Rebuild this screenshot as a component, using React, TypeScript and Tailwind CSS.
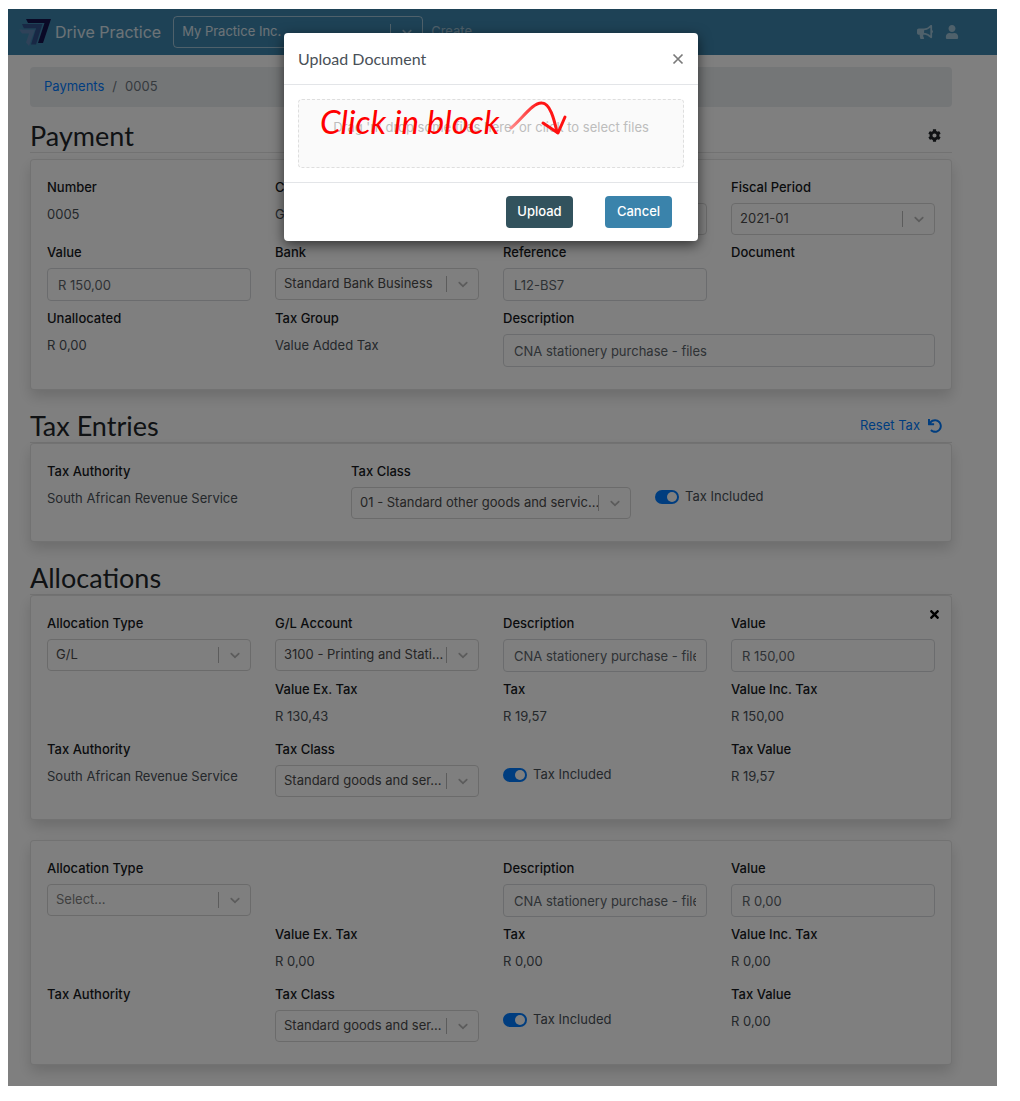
import { useState, type ReactNode } from 'react';
import { FaBullhorn, FaCog, FaTimes, FaUndo, FaUser } from 'react-icons/fa';
import clsx from 'clsx';

const ALLOCATIONS = [
  {
    id: 'a1',
    type: 'G/L',
    account: '3100 - Printing and Stati...',
    description: 'CNA stationery purchase - files',
    value: 'R 150,00',
    exTax: 'R 130,43',
    tax: 'R 19,57',
    incTax: 'R 150,00',
    authority: 'South African Revenue Service',
    taxClass: 'Standard goods and ser...',
    taxValue: 'R 19,57',
    removable: true,
  },
  {
    id: 'a2',
    type: 'Select...',
    account: '',
    description: 'CNA stationery purchase - files',
    value: 'R 0,00',
    exTax: 'R 0,00',
    tax: 'R 0,00',
    incTax: 'R 0,00',
    authority: '',
    taxClass: 'Standard goods and ser...',
    taxValue: 'R 0,00',
    removable: false,
  },
];

function Logo() {
  return (
    <svg viewBox="0 0 32 27" className="h-[27px] w-8" aria-hidden="true">
      <path d="M7 0h25L24 24h-5l6.500-20H9z" fill="#14124c" />
      <path d="M3 5h20.500L17 25.500h-5l5-16H5z" fill="#31508a" />
      <path d="M0 10.500h16L10 27l-3-3.500 3-9H3z" fill="#5e84b2" />
      <path d="M8 4.500h16.500M3 10h14" stroke="#3c84ac" strokeWidth="0.8" />
    </svg>
  );
}

function Chevron() {
  return (
    <svg viewBox="0 0 20 20" className="h-4 w-4" fill="currentColor" aria-hidden="true">
      <path d="M4.516 7.548c0.436-0.446 1.043-0.481 1.576 0l3.908 3.747 3.908-3.747c0.533-0.481 1.141-0.446 1.574 0 0.436 0.445 0.408 1.197 0 1.615-0.406 0.418-4.695 4.502-4.695 4.502-0.217 0.223-0.502 0.335-0.787 0.335s-0.57-0.112-0.789-0.335c0 0-4.287-4.084-4.695-4.502s-0.436-1.17 0-1.615z" />
    </svg>
  );
}

function Select({ id, value, dark = false, muted = false }: { id: string; value: string; dark?: boolean; muted?: boolean }) {
  return (
    <div className="relative h-8">
      <select
        id={id}
        aria-label={dark ? 'Practice' : undefined}
        className={clsx(
          'h-8 w-full appearance-none rounded border bg-transparent pl-2 pr-8 text-[13px]',
          dark ? 'border-white/50 text-white/80' : 'border-[#d6d6d6]',
          !dark && (muted ? 'text-[#808080]' : 'text-[#4a4a4a]')
        )}
      >
        <option>{value}</option>
      </select>
      <div className={clsx('pointer-events-none absolute inset-y-0 right-2 flex items-center gap-2', dark ? 'text-white/50' : 'text-[#b8b8b8]')}>
        <span className="h-4 w-px bg-current" />
        <Chevron />
      </div>
    </div>
  );
}

function Input({ id, value }: { id: string; value: string }) {
  return (
    <input
      id={id}
      defaultValue={value}
      className="h-[33px] w-full rounded border border-[#d6d9dc] bg-transparent px-2.5 text-[13px] text-[#5d646b]"
    />
  );
}

function Field({ label, id, wide, children }: { label: string; id?: string; wide?: boolean; children?: ReactNode }) {
  const style = 'mb-[5px] block h-[22px] text-[13px] font-medium leading-[22px] text-[#16191c]';
  return (
    <div className={clsx('mb-1.5 min-w-0', wide && 'col-span-2')}>
      {id ? <label htmlFor={id} className={style}>{label}</label> : <div className={style}>{label}</div>}
      {children}
    </div>
  );
}

function Plain({ children }: { children?: ReactNode }) {
  return <p className="h-[27px] whitespace-nowrap text-[13px] leading-[22px] text-[#495057]">{children}</p>;
}

function TaxSwitch() {
  const [on, setOn] = useState(true);
  return (
    <div className="mb-1.5 pt-[26px]">
      <label className="relative flex h-[22px] items-center gap-1.5 text-[13px] text-[#495057]">
        <input type="checkbox" checked={on} onChange={() => setOn(!on)} className="sr-only" />
        <span className={clsx('flex h-3.5 w-6 items-center rounded-full px-0.5', on ? 'justify-end bg-[#007bff]' : 'justify-start bg-[#adb5bd]')}>
          <span className="h-2.5 w-2.5 rounded-full bg-white" />
        </span>
        Tax Included
      </label>
    </div>
  );
}

function Heading({ title, children }: { title: string; children?: ReactNode }) {
  return (
    <div className="flex items-center justify-between border-b border-black/10">
      <h2 className="font-[Lato,sans-serif] text-[27px] leading-[33px] text-[#212529]">{title}</h2>
      {children}
    </div>
  );
}

function Card({ cols = 4, children }: { cols?: 3 | 4; children: ReactNode }) {
  return (
    <section
      className={clsx(
        'relative grid gap-x-6 rounded border border-black/10 bg-white p-4 shadow-[0_7px_14px_rgba(0,0,0,0.15)]',
        cols === 3 ? 'grid-cols-3' : 'grid-cols-4'
      )}
    >
      {children}
    </section>
  );
}

function UploadModal() {
  return (
    <div className="absolute inset-0 bg-black/50 pl-[22px] pr-[45px] pt-6">
      <div role="dialog" aria-label="Upload Document" className="relative mx-auto max-w-[414px] rounded bg-white shadow-[0_4px_13px_rgba(0,0,0,0.6)]">
        <div className="flex h-[52px] items-center justify-between border-b border-[#e3e5e8] px-3.5">
          <h5 className="font-[Lato,sans-serif] text-base text-[#495057]">Upload Document</h5>
          <button aria-label="Close" className="text-[#7a7a7a]">
            <svg viewBox="0 0 12 12" className="h-3 w-3" stroke="currentColor" strokeWidth="1.7" aria-hidden="true">
              <path d="M1.5 1.5l9 9M10.5 1.5l-9 9" />
            </svg>
          </button>
        </div>
        <div className="p-3.5">
          <button className="block h-[69px] w-full rounded-sm border border-dashed border-[#dedede] bg-[#fafafa] px-4 pb-3 text-center text-[13px] text-[#bdbdbd]">
            Drag 'n' drop some files here, or click to select files
          </button>
        </div>
        <div className="flex h-[59px] items-center justify-end gap-8 border-t border-[#e3e5e8] pr-[26px] text-[13px] font-medium text-white">
          <button className="h-8 w-[67px] rounded bg-[#32525d]">Upload</button>
          <button className="h-8 w-[67px] rounded bg-[#3a83ab]">Cancel</button>
        </div>

        <div className="pointer-events-none absolute left-9 top-[68px] flex items-start gap-2.5">
          <span className="whitespace-nowrap font-[Lato,cursive] text-[33px] italic leading-10 text-[#ff0000]">Click in block</span>
          <svg viewBox="0 0 58 36" className="h-9 w-[58px]" fill="none" strokeLinecap="round" strokeLinejoin="round" aria-hidden="true">
            <defs>
              <linearGradient id="fade" x1="0" x2="1">
                <stop offset="0" stopColor="#ff8a8a" />
                <stop offset="0.6" stopColor="#ff1515" />
              </linearGradient>
            </defs>
            <path d="M2 27C13 18 24 1 33 2c8 0 12 16 15 29" stroke="url(#fade)" strokeWidth="3" />
            <path d="M34 22l15 10 7-16" stroke="#ff1010" strokeWidth="3" />
          </svg>
        </div>
      </div>
    </div>
  );
}

export default function App() {
  return (
    <div className="bg-white pb-[15px] pl-2 pr-[23px] pt-[9px] font-[Inter,sans-serif]">
      <div className="relative bg-white">
        <header className="flex h-[46px] items-center bg-[#3c84ac] pl-[11px] pr-[38px]">
          <Logo />
          <span className="ml-1 whitespace-nowrap text-base text-white/80">Drive Practice</span>
          <div className="ml-3 w-[250px]">
            <Select id="practice" value="My Practice Inc." dark />
          </div>
          <a href="#create" className="ml-2 text-[13px] text-white/50">Create</a>
          <div className="ml-auto flex items-center gap-3 text-white/50">
            <button aria-label="Announcements"><FaBullhorn size={16} /></button>
            <button aria-label="Account"><FaUser size={14} /></button>
          </div>
        </header>

        <main className="pb-[21px] pl-[22px] pr-[45px] pt-3">
          <nav className="mb-3 flex h-10 items-center gap-2 rounded bg-[#e9ecef] px-3.5 text-[13px] text-[#6c757d]">
            <a href="#payments" className="text-[#007bff]">Payments</a>
            <span>/</span>
            <span>0005</span>
          </nav>

          <Heading title="Payment">
            <button aria-label="Settings" className="mr-[11px] text-[#212529]"><FaCog size={13} /></button>
          </Heading>
          <div className="mt-1.5">
            <Card>
              <Field label="Number"><Plain>0005</Plain></Field>
              <Field label="Category"><Plain>G/L</Plain></Field>
              <Field label="Date" id="date"><Select id="date" value="" /></Field>
              <Field label="Fiscal Period" id="period"><Select id="period" value="2021-01" /></Field>
              <Field label="Value" id="value"><Input id="value" value="R 150,00" /></Field>
              <Field label="Bank" id="bank"><Select id="bank" value="Standard Bank Business" /></Field>
              <Field label="Reference" id="reference"><Input id="reference" value="L12-BS7" /></Field>
              <Field label="Document" />
              <Field label="Unallocated"><Plain>R 0,00</Plain></Field>
              <Field label="Tax Group"><Plain>Value Added Tax</Plain></Field>
              <Field label="Description" id="description" wide><Input id="description" value="CNA stationery purchase - files" /></Field>
            </Card>
          </div>

          <div className="mt-[19px]">
            <Heading title="Tax Entries">
              <button className="mr-2.5 flex items-center gap-2 text-[13px] text-[#007bff]">
                Reset Tax
                <FaUndo size={14} />
              </button>
            </Heading>
            <Card cols={3}>
              <Field label="Tax Authority"><Plain>South African Revenue Service</Plain></Field>
              <Field label="Tax Class" id="tax-class"><Select id="tax-class" value="01 - Standard other goods and servic..." /></Field>
              <TaxSwitch />
            </Card>
          </div>

          <div className="mt-[19px]">
            <Heading title="Allocations" />
            <div className="flex flex-col gap-5">
              {ALLOCATIONS.map((a) => (
                <Card key={a.id}>
                  {a.removable && (
                    <button aria-label="Remove allocation" className="absolute right-2.5 top-3 text-black"><FaTimes size={13} /></button>
                  )}
                  <Field label="Allocation Type" id={`${a.id}-type`}>
                    <Select id={`${a.id}-type`} value={a.type} muted={!a.account} />
                  </Field>
                  {a.account ? (
                    <Field label="G/L Account" id={`${a.id}-account`}><Select id={`${a.id}-account`} value={a.account} /></Field>
                  ) : (
                    <div />
                  )}
                  <Field label="Description" id={`${a.id}-desc`}><Input id={`${a.id}-desc`} value={a.description} /></Field>
                  <Field label="Value" id={`${a.id}-value`}><Input id={`${a.id}-value`} value={a.value} /></Field>
                  <div />
                  <Field label="Value Ex. Tax"><Plain>{a.exTax}</Plain></Field>
                  <Field label="Tax"><Plain>{a.tax}</Plain></Field>
                  <Field label="Value Inc. Tax"><Plain>{a.incTax}</Plain></Field>
                  <Field label="Tax Authority"><Plain>{a.authority}</Plain></Field>
                  <Field label="Tax Class" id={`${a.id}-class`}><Select id={`${a.id}-class`} value={a.taxClass} /></Field>
                  <TaxSwitch />
                  <Field label="Tax Value"><Plain>{a.taxValue}</Plain></Field>
                </Card>
              ))}
            </div>
          </div>
        </main>

        <UploadModal />
      </div>
    </div>
  );
}
